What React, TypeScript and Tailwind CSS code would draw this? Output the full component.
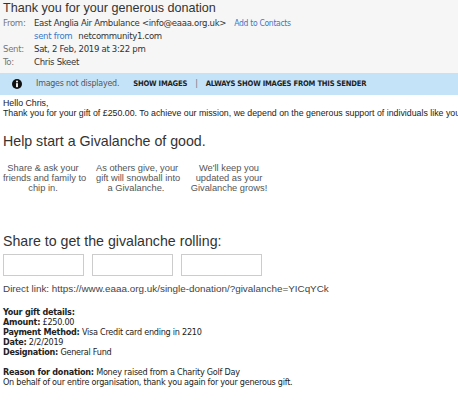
import React from "react";

const tahoma = { fontFamily: '"DejaVu Sans Condensed", "DejaVu Sans", sans-serif' };
const arial = { fontFamily: '"Liberation Sans", Arial, sans-serif' };

function HeaderRow({ label, children }: { label: string; children: React.ReactNode }) {
  return (
    <div className="flex h-[13px] items-center">
      <span className="w-[31px] text-[#777]">{label}</span>
      <span className="flex items-center text-[#333]">{children}</span>
    </div>
  );
}

function Step({ text }: { text: string[] }) {
  return (
    <div className="w-[80px] text-center text-[9.3px] leading-[10px] text-[#555]">
      {text.map((t, i) => (
        <div key={i}>{t}</div>
      ))}
    </div>
  );
}

export default function App() {
  return (
    <div className="h-[400px] w-[458px] overflow-hidden whitespace-nowrap bg-white">
      {/* message header */}
      <div className="bg-[#f6f6f6] px-[3px] pb-[4px] text-[9.5px] tracking-[-0.3px]" style={tahoma}>
        <div className="text-[12.6px] leading-[17px] tracking-normal text-[#333]" style={arial}>
          Thank you for your generous donation
        </div>
        <HeaderRow label="From:">
          East Anglia Air Ambulance &lt;info@eaaa.org.uk&gt;
          <span className="ml-[8px] text-[8.5px] text-[#3a78c8]">Add to Contacts</span>
        </HeaderRow>
        <HeaderRow label="">
          <span className="mr-[6px] text-[#3a78c8]">sent from</span>netcommunity1.com
        </HeaderRow>
        <HeaderRow label="Sent:">Sat, 2 Feb, 2019 at 3:22 pm</HeaderRow>
        <HeaderRow label="To:">Chris Skeet</HeaderRow>
      </div>

      {/* images blocked bar */}
      <div className="flex h-[22px] items-center bg-[#c5e3f8] pl-[12px] text-[8.8px] tracking-[-0.2px]" style={tahoma}>
        <svg width="10" height="10" viewBox="0 0 12 12">
          <circle cx="6" cy="6" r="6" fill="#111" />
          <circle cx="6" cy="3" r="1.2" fill="#fff" />
          <rect x="4.9" y="5" width="2.2" height="4.8" fill="#fff" />
        </svg>
        <span className="ml-[14px] text-[#555]">Images not displayed.</span>
        <span className="ml-[14px] text-[7.6px] font-bold text-[#222]">SHOW IMAGES</span>
        <span className="mx-[8px] text-[#777]">|</span>
        <span className="text-[7.6px] font-bold text-[#222]">ALWAYS SHOW IMAGES FROM THIS SENDER</span>
      </div>

      {/* body */}
      <div className="px-[3px]" style={arial}>
        <div className="mt-[3px] text-[8.8px] leading-[10px] text-[#222]">
          <div>Hello Chris,</div>
          <div>
            Thank you for your gift of £250.00. To achieve our mission, we depend on the generous support of
            individuals like you. We
          </div>
        </div>

        <div className="mt-[14px] text-[14.2px] leading-[18px] text-[#333]">Help start a Givalanche of good.</div>

        <div className="mt-[13px] flex gap-[13px]">
          <Step text={["Share & ask your", "friends and family to", "chip in."]} />
          <Step text={["As others give, your", "gift will snowball into", "a Givalanche."]} />
          <Step text={["We'll keep you", "updated as your", "Givalanche grows!"]} />
        </div>

        <div className="mt-[39px] text-[14.2px] leading-[18px] text-[#333]">
          Share to get the givalanche rolling:
        </div>

        <div className="mt-[4px] flex gap-[8px]">
          <div className="h-[22px] w-[81px] border border-[#ccc]" />
          <div className="h-[22px] w-[81px] border border-[#ccc]" />
          <div className="h-[22px] w-[81px] border border-[#ccc]" />
        </div>

        <div className="mt-[8px] text-[9.9px] leading-[10px] text-[#444]">
          Direct link: https://www.eaaa.org.uk/single-donation/?givalanche=YICqYCk
        </div>
      </div>

      {/* gift details */}
      <div className="mt-[13px] px-[3px] text-[9px] leading-[10px] tracking-[-0.25px] text-[#222]" style={tahoma}>
        <div className="font-bold">Your gift details:</div>
        <div>
          <b>Amount:</b> £250.00
        </div>
        <div>
          <b>Payment Method:</b> Visa Credit card ending in 2210
        </div>
        <div>
          <b>Date:</b> 2/2/2019
        </div>
        <div>
          <b>Designation:</b> General Fund
        </div>
        <div className="mt-[10px]">
          <b>Reason for donation:</b> Money raised from a Charity Golf Day
        </div>
        <div>On behalf of our entire organisation, thank you again for your generous gift.</div>
      </div>
    </div>
  );
}
